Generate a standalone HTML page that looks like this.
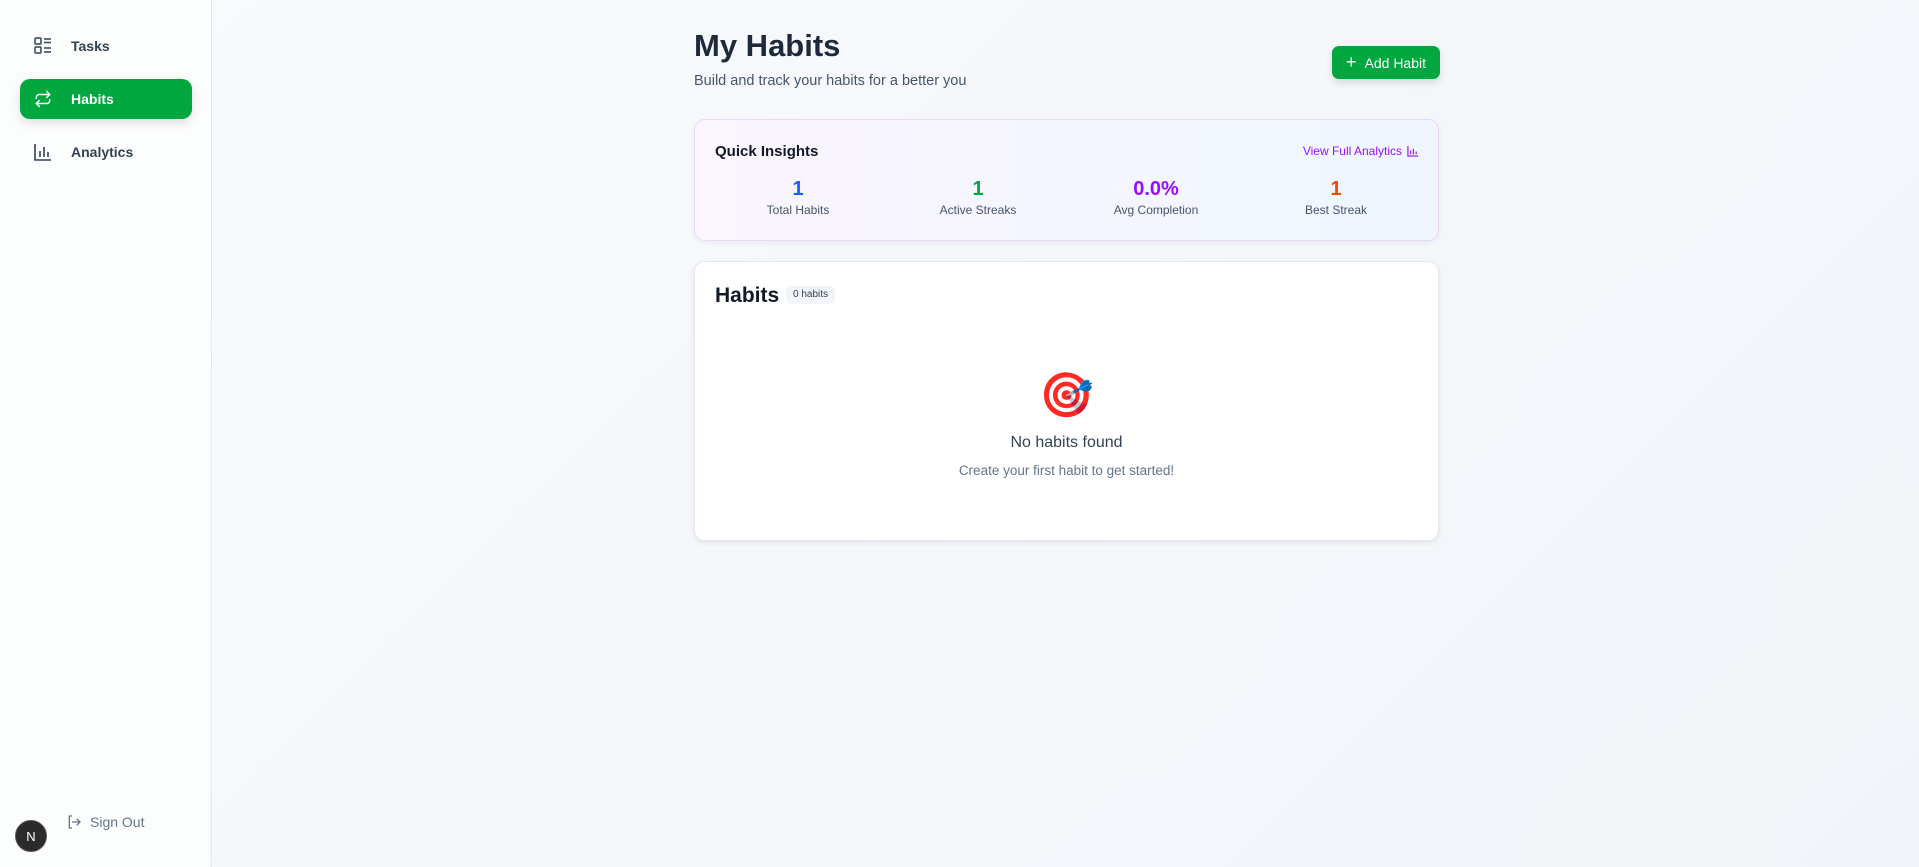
<!DOCTYPE html>
<html><head><meta charset="utf-8"><style>
*{box-sizing:border-box;margin:0;padding:0}
body{width:1919px;height:867px;overflow:hidden;font-family:"Liberation Sans",sans-serif;background:linear-gradient(135deg,#f8fafc,#f1f5f9);position:relative;color:#1e293b}
.side{position:absolute;left:0;top:0;width:212px;height:867px;background:#fcfdfd;border-right:1px solid #e5e7eb}
.nav{position:absolute;left:20px;width:172px;height:40px;border-radius:10px;display:flex;align-items:center;padding-left:14px;font-size:14px;font-weight:bold;color:#334155}
.nav svg{margin-right:19px}
.nav.act{background:#00a63e;color:#fff;box-shadow:0 4px 10px rgba(0,0,0,.12)}
.signout{position:absolute;left:66px;top:814px;font-size:14px;color:#64748b;display:flex;align-items:center;gap:8px}
.n{position:absolute;left:15px;top:820px;width:32px;height:32px;border-radius:50%;background:#2b2b2b;border:1px solid #555;color:#fff;font-size:13px;display:flex;align-items:center;justify-content:center}
h1{position:absolute;left:694px;top:28px;font-size:31px;font-weight:bold;color:#1e293b}
.sub{position:absolute;left:694px;top:73px;font-size:14.5px;color:#475569}
.btn{position:absolute;left:1332px;top:46px;width:108px;height:33px;background:#00a63e;border-radius:7px;color:#fff;font-size:14px;display:flex;align-items:center;justify-content:center;gap:8px;box-shadow:0 4px 8px rgba(0,0,0,.12)}
.card{position:absolute;left:694px;width:745px;border-radius:11px}
.ins{top:119px;height:122px;background:linear-gradient(90deg,#faf5ff,#eff6ff);border:1px solid #e9d5ff;box-shadow:0 2px 6px rgba(0,0,0,.06)}
.hab{top:261px;height:280px;background:#fff;border:1px solid #e5e7eb;box-shadow:0 2px 6px rgba(0,0,0,.08)}
.abs{position:absolute}
.stat{position:absolute;top:57px;width:200px;text-align:center}
.stat b{display:block;font-size:20px;line-height:24px}
.stat span{display:block;font-size:12px;color:#475569;margin-top:2px}
</style></head><body>
<div class="side">
 <div class="nav" style="top:26px"><svg width="18" height="18" viewBox="0 0 18 18" fill="none" stroke="#334155" stroke-width="1.5"><rect x="1" y="1" width="6" height="6" rx="1"/><rect x="1" y="10" width="6" height="6" rx="1"/><path d="M10 2h7M10 5.5h7M10 11h7M10 15h7"/></svg>Tasks</div>
 <div class="nav act" style="top:79px"><svg width="18" height="18" viewBox="0 0 24 24" fill="none" stroke="#fff" stroke-width="2" stroke-linecap="round" stroke-linejoin="round"><path d="m17 2 4 4-4 4"/><path d="M3 11v-1a4 4 0 0 1 4-4h14"/><path d="m7 22-4-4 4-4"/><path d="M21 13v1a4 4 0 0 1-4 4H3"/></svg>Habits</div>
 <div class="nav" style="top:132px"><svg width="18" height="18" viewBox="0 0 18 18" fill="none" stroke="#334155" stroke-width="1.6"><path d="M1 1v16h16M6 8v6M10 4v10M14 9v5"/></svg>Analytics</div>
 <div class="signout"><svg width="16" height="16" viewBox="0 0 24 24" fill="none" stroke="#64748b" stroke-width="2"><path d="M9 21H5V3h4M16 17l5-5-5-5M21 12H9"/></svg>Sign Out</div>
 <div class="n">N</div>
</div>
<h1>My Habits</h1>
<div class="sub">Build and track your habits for a better you</div>
<div class="btn"><span style="font-size:18px;font-weight:300">+</span>Add Habit</div>
<div class="card ins">
 <div class="abs" style="left:20px;top:23px;font-size:15px;font-weight:bold;color:#111827">Quick Insights</div>
 <div class="abs" style="right:20px;top:24px;font-size:12px;color:#9810fa;display:flex;gap:5px;align-items:center">View Full Analytics <svg width="11" height="11" viewBox="0 0 12 12" fill="none" stroke="#9810fa" stroke-width="1.3"><path d="M1 0v11h11M4 5v4M7 3v6M10 6v3"/></svg></div>
 <div class="stat" style="left:3px"><b style="color:#155dfc">1</b><span>Total Habits</span></div>
 <div class="stat" style="left:183px"><b style="color:#00a63e">1</b><span>Active Streaks</span></div>
 <div class="stat" style="left:361px"><b style="color:#9810fa">0.0%</b><span>Avg Completion</span></div>
 <div class="stat" style="left:541px"><b style="color:#f54900">1</b><span>Best Streak</span></div>
</div>
<div class="card hab">
 <div class="abs" style="left:20px;top:22px;font-size:21px;font-weight:600;color:#111827">Habits</div>
 <div class="abs" style="left:91px;top:24px;height:18px;padding:0 7px;background:#f1f5f9;border-radius:5px;font-size:10px;line-height:18px;color:#334155">0 habits</div>
 <div class="abs" style="left:0;width:100%;top:105px;text-align:center;font-size:44px;line-height:56px;font-family:'Noto Color Emoji',sans-serif">🎯</div>
 <div class="abs" style="left:0;width:100%;top:172px;text-align:center;font-size:16px;color:#334155">No habits found</div>
 <div class="abs" style="left:0;width:100%;top:201px;text-align:center;font-size:13.5px;color:#64748b">Create your first habit to get started!</div>
</div>
</body></html>
